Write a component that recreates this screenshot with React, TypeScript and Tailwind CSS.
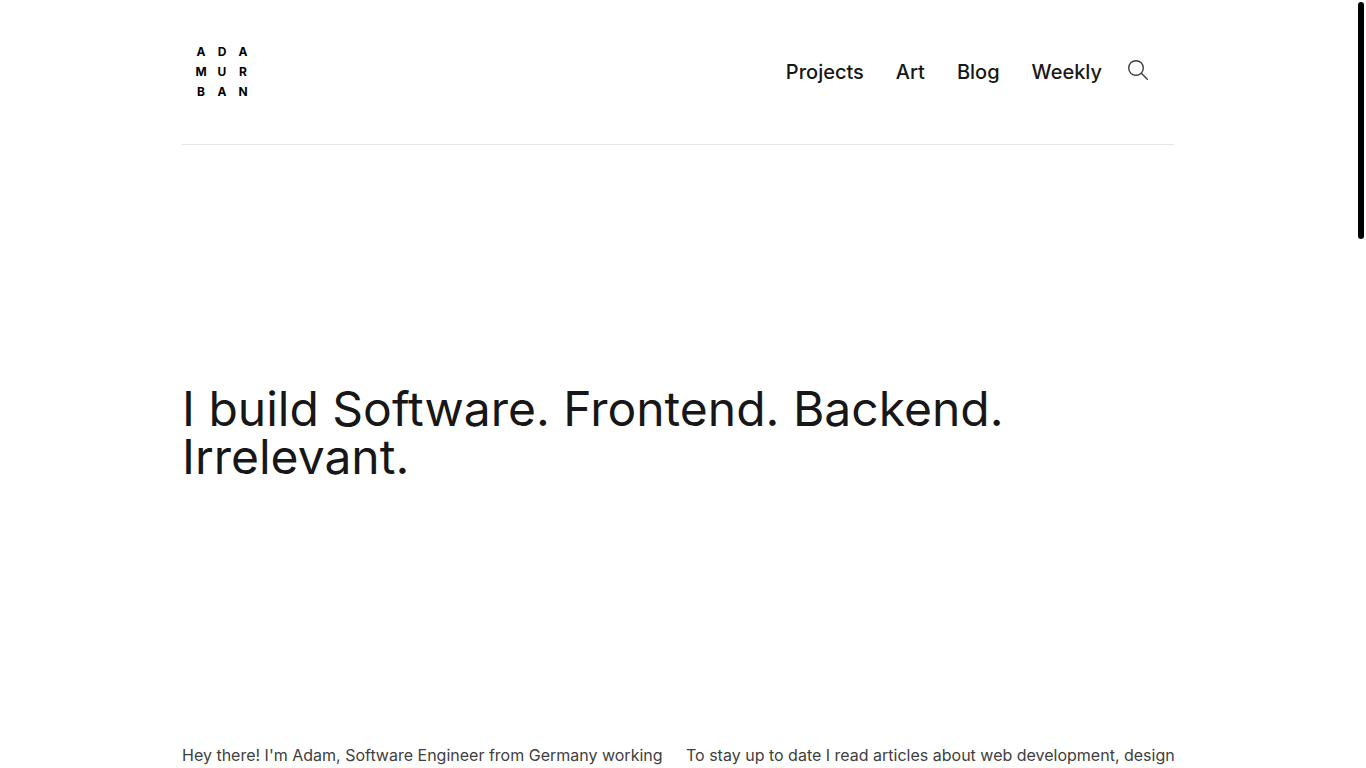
const links = ['Projects', 'Art', 'Blog', 'Weekly'];
const logoRows = ['ADA', 'MUR', 'BAN'];

export default function App() {
  return (
    <div className="flex h-screen items-start overflow-hidden bg-white font-['Inter',sans-serif] text-[#171717]">
      <div className="mx-auto flex w-full max-w-[992px] flex-col">
        <header className="flex h-[145px] items-center justify-between border-b border-[#e5e5e5] pr-6 pl-3">
          <a href="#" aria-label="Adam Urban" className="grid w-[56px] gap-1 text-center text-xs leading-4 font-bold text-black">
            {logoRows.map((row) => (
              <span key={row} className="grid grid-cols-[14px_28px_14px]">
                {row.split('').map((letter, i) => (
                  <span key={i}>{letter}</span>
                ))}
              </span>
            ))}
          </a>
          <nav className="flex items-center text-xl font-medium">
            <div className="flex gap-8">
              {links.map((link) => (
                <a key={link} href="#">{link}</a>
              ))}
            </div>
            <button aria-label="Search" className="ml-6 pb-1 text-[#404040]">
              <svg width="24" height="24" viewBox="0 0 24 24" fill="none" stroke="currentColor" strokeWidth="1.4" strokeLinecap="round">
                <circle cx="10" cy="10" r="7.3" />
                <path d="m15.3 15.3 6 6" />
              </svg>
            </button>
          </nav>
        </header>
        <main>
          <h1 className="pt-60 pb-[262px] text-5xl leading-[48px]">I build Software. Frontend. Backend. Irrelevant.</h1>
          <div className="grid grid-cols-2 gap-4 text-base text-[#404040]">
            <p className="whitespace-nowrap">Hey there! I'm Adam, Software Engineer from Germany working</p>
            <p className="whitespace-nowrap">To stay up to date I read articles about web development, design</p>
          </div>
        </main>
      </div>
      <div className="mx-[2px] mt-[2px] h-[237px] w-[6px] shrink-0 rounded-full bg-black" />
    </div>
  );
}
